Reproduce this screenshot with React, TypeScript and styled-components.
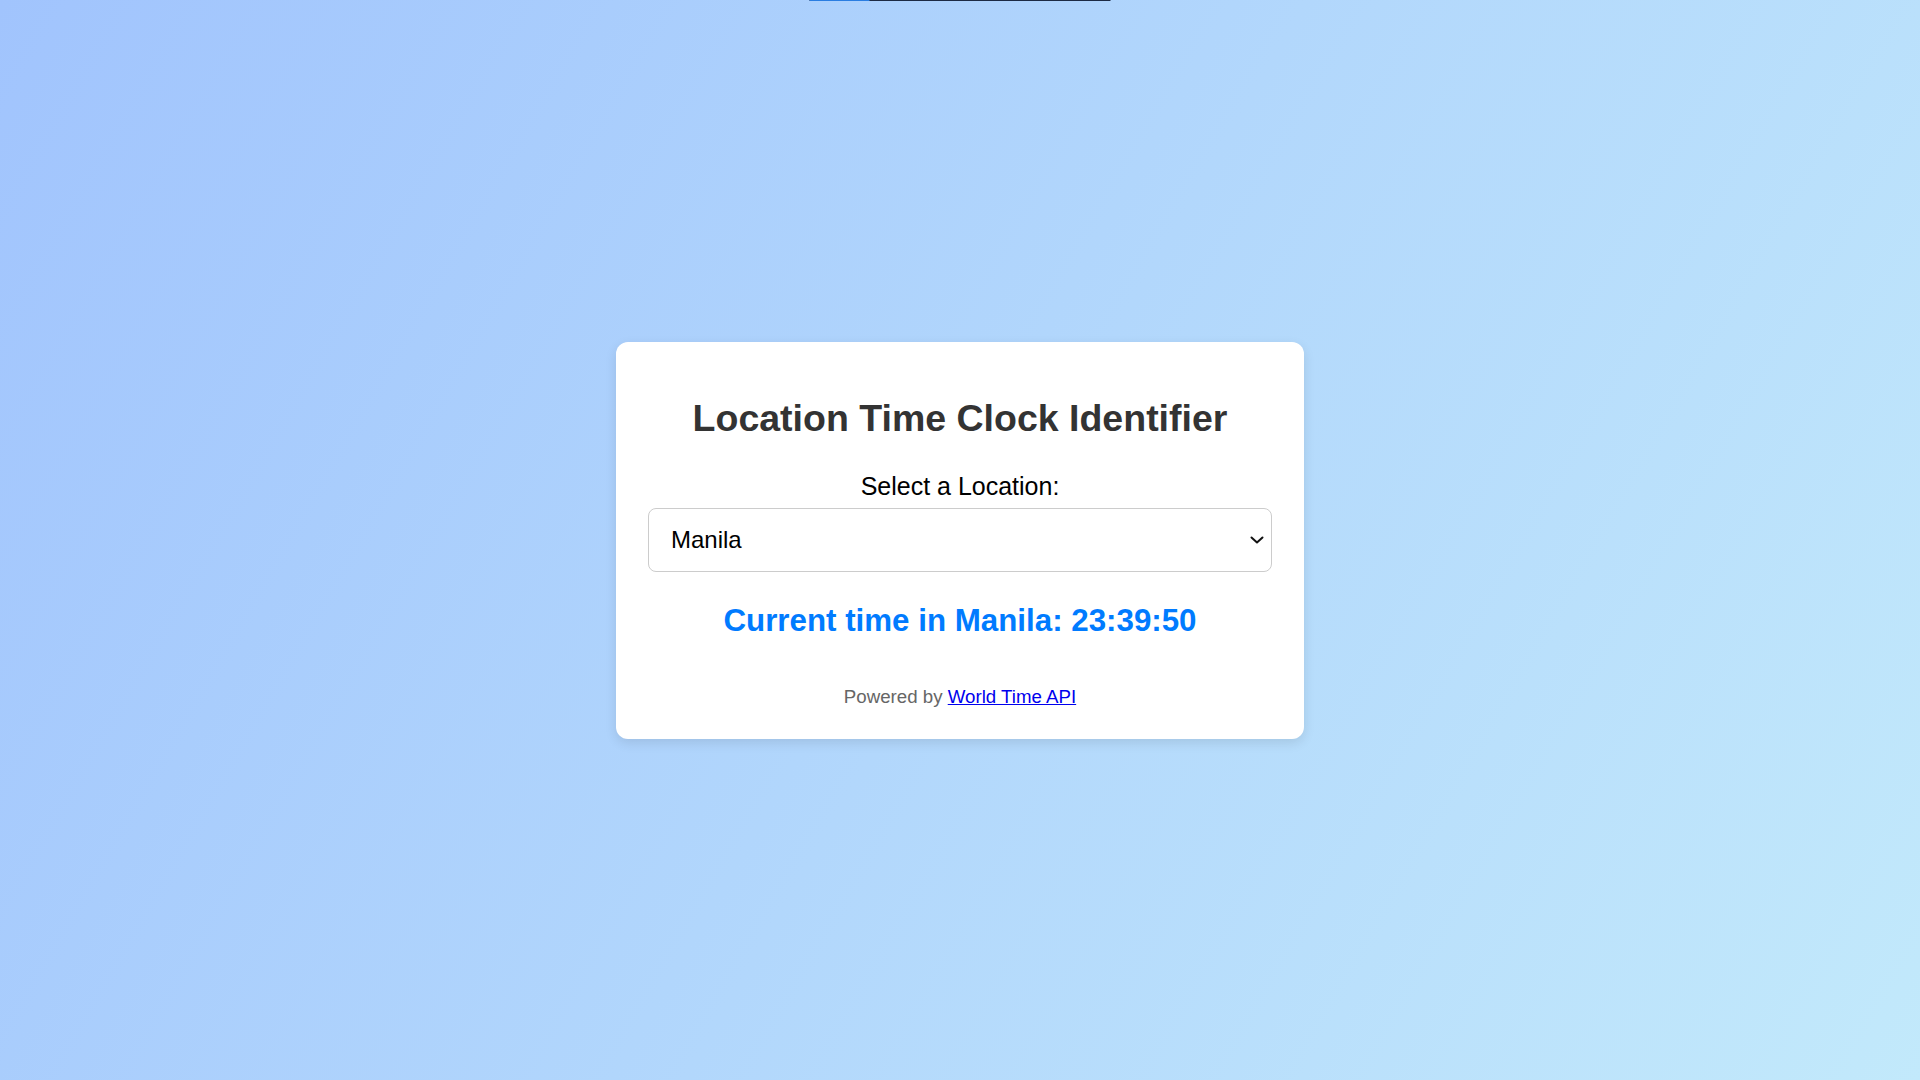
import React, { useState } from "react";
import styled, { createGlobalStyle } from "styled-components";

const GlobalStyle = createGlobalStyle`
  html, body {
    margin: 0;
    padding: 0;
  }
  body {
    font-family: "Liberation Sans", Arial, sans-serif;
    background: linear-gradient(120deg, #a1c4fd 0%, #c2e9fb 100%);
    min-height: 100vh;
  }
`;

const Page = styled.div`
  position: relative;
  height: 100vh;
  display: flex;
  align-items: center;
  justify-content: center;
`;

const LoadBar = styled.div`
  position: absolute;
  top: 0;
  left: 50%;
  transform: translateX(-50%);
  width: 301px;
  height: 1px;
  background: #1c2a44;
  overflow: hidden;
`;

const LoadFill = styled.div`
  height: 100%;
  background: #2a7de1;
`;

const Card = styled.div`
  box-sizing: border-box;
  width: 688px;
  padding: 32px 32px 31px;
  background: #ffffff;
  border-radius: 12px;
  box-shadow: 0 4px 12px rgba(0, 0, 0, 0.1);
  text-align: center;
`;

const Title = styled.h1`
  margin: 23px 0 32px;
  font-size: 37.5px;
  font-weight: 700;
  color: #333333;
`;

const Label = styled.label`
  display: block;
  margin-bottom: 7px;
  font-size: 25px;
  color: #000000;
`;

const SelectWrap = styled.div`
  position: relative;
`;

const LocationSelect = styled.select`
  box-sizing: border-box;
  display: block;
  width: 100%;
  height: 64px;
  padding: 0 40px 0 22px;
  appearance: none;
  font-family: "Liberation Sans", Arial, sans-serif;
  font-size: 24px;
  color: #000000;
  background: #ffffff;
  border: 1px solid #cccccc;
  border-radius: 8px;
  outline: none;
`;

const Chevron = styled.svg`
  position: absolute;
  top: 50%;
  right: 8px;
  width: 14px;
  height: 8px;
  margin-top: -4px;
  pointer-events: none;
`;

const TimeText = styled.div`
  margin: 31px 0 47px;
  font-size: 31.3px;
  font-weight: 700;
  color: #007bff;
`;

const Footer = styled.p`
  margin: 0;
  font-size: 18.7px;
  color: #666666;

  a {
    color: #0000ee;
  }
`;

const locations = ["Manila", "Tokyo", "London", "New York", "Sydney"];

export default function App() {
  const [location, setLocation] = useState("Manila");
  const progress = 20;

  return (
    <>
      <GlobalStyle />
      <Page>
        <LoadBar>
          <LoadFill style={{ width: `${progress}%` }} />
        </LoadBar>
        <Card>
          <Title>Location Time Clock Identifier</Title>
          <Label htmlFor="location">Select a Location:</Label>
          <SelectWrap>
            <LocationSelect
              id="location"
              value={location}
              onChange={(e) => setLocation(e.target.value)}
            >
              {locations.map((loc) => (
                <option key={loc} value={loc}>
                  {loc}
                </option>
              ))}
            </LocationSelect>
            <Chevron viewBox="0 0 14 8">
              <path
                d="M1.5 1.5 L7 6.5 L12.5 1.5"
                fill="none"
                stroke="#111"
                strokeWidth="2"
                strokeLinecap="round"
                strokeLinejoin="round"
              />
            </Chevron>
          </SelectWrap>
          <TimeText>Current time in {location}: 23:39:50</TimeText>
          <Footer>
            Powered by <a href="#">World Time API</a>
          </Footer>
        </Card>
      </Page>
    </>
  );
}
